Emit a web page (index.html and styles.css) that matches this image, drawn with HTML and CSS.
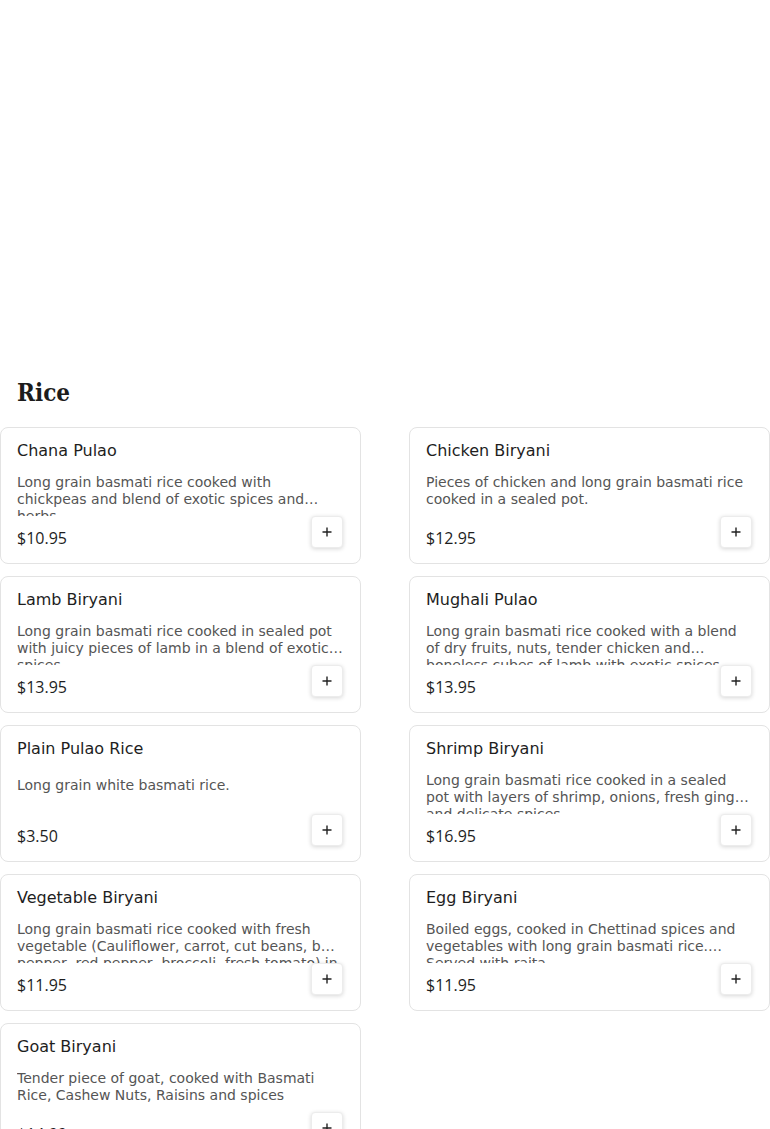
FILE: index.html
```html
<!DOCTYPE html>
<html lang="en">
<head>
<meta charset="utf-8">
<title>Rice</title>
<link rel="stylesheet" href="styles.css">
</head>
<body>
<div class="hero"></div>
<section class="category">
  <h2 class="category-title">Rice</h2>
  <div class="menu-grid">
    <div class="item-card">
      <div class="item-name">Chana Pulao</div>
      <div class="item-desc">Long grain basmati rice cooked with chickpeas and blend of exotic spices and herbs</div>
      <div class="item-footer"><span class="item-price">$10.95</span><button class="add-btn" aria-label="Add"><svg viewBox="0 0 12 12" width="12" height="12"><path d="M6 1.5v9M1.5 6h9" stroke="#222" stroke-width="1.4" fill="none"/></svg></button></div>
    </div>
    <div class="item-card">
      <div class="item-name">Chicken Biryani</div>
      <div class="item-desc">Pieces of chicken and long grain basmati rice cooked in a sealed pot.</div>
      <div class="item-footer"><span class="item-price">$12.95</span><button class="add-btn" aria-label="Add"><svg viewBox="0 0 12 12" width="12" height="12"><path d="M6 1.5v9M1.5 6h9" stroke="#222" stroke-width="1.4" fill="none"/></svg></button></div>
    </div>
    <div class="item-card">
      <div class="item-name">Lamb Biryani</div>
      <div class="item-desc">Long grain basmati rice cooked in sealed pot with juicy pieces of lamb in a blend of exotic spices</div>
      <div class="item-footer"><span class="item-price">$13.95</span><button class="add-btn" aria-label="Add"><svg viewBox="0 0 12 12" width="12" height="12"><path d="M6 1.5v9M1.5 6h9" stroke="#222" stroke-width="1.4" fill="none"/></svg></button></div>
    </div>
    <div class="item-card">
      <div class="item-name">Mughali Pulao</div>
      <div class="item-desc">Long grain basmati rice cooked with a blend of dry fruits, nuts, tender chicken and boneless cubes of lamb with exotic spices</div>
      <div class="item-footer"><span class="item-price">$13.95</span><button class="add-btn" aria-label="Add"><svg viewBox="0 0 12 12" width="12" height="12"><path d="M6 1.5v9M1.5 6h9" stroke="#222" stroke-width="1.4" fill="none"/></svg></button></div>
    </div>
    <div class="item-card">
      <div class="item-name">Plain Pulao Rice</div>
      <div class="item-desc item-desc--short">Long grain white basmati rice.</div>
      <div class="item-footer"><span class="item-price">$3.50</span><button class="add-btn" aria-label="Add"><svg viewBox="0 0 12 12" width="12" height="12"><path d="M6 1.5v9M1.5 6h9" stroke="#222" stroke-width="1.4" fill="none"/></svg></button></div>
    </div>
    <div class="item-card">
      <div class="item-name">Shrimp Biryani</div>
      <div class="item-desc">Long grain basmati rice cooked in a sealed pot with layers of shrimp, onions, fresh ginger and delicate spices</div>
      <div class="item-footer"><span class="item-price">$16.95</span><button class="add-btn" aria-label="Add"><svg viewBox="0 0 12 12" width="12" height="12"><path d="M6 1.5v9M1.5 6h9" stroke="#222" stroke-width="1.4" fill="none"/></svg></button></div>
    </div>
    <div class="item-card">
      <div class="item-name">Vegetable Biryani</div>
      <div class="item-desc">Long grain basmati rice cooked with fresh vegetable (Cauliflower, carrot, cut beans, bell pepper, red pepper, broccoli, fresh tomato) in a blend of spices</div>
      <div class="item-footer"><span class="item-price">$11.95</span><button class="add-btn" aria-label="Add"><svg viewBox="0 0 12 12" width="12" height="12"><path d="M6 1.5v9M1.5 6h9" stroke="#222" stroke-width="1.4" fill="none"/></svg></button></div>
    </div>
    <div class="item-card">
      <div class="item-name">Egg Biryani</div>
      <div class="item-desc">Boiled eggs, cooked in Chettinad spices and vegetables with long grain basmati rice. Served with raita</div>
      <div class="item-footer"><span class="item-price">$11.95</span><button class="add-btn" aria-label="Add"><svg viewBox="0 0 12 12" width="12" height="12"><path d="M6 1.5v9M1.5 6h9" stroke="#222" stroke-width="1.4" fill="none"/></svg></button></div>
    </div>
    <div class="item-card">
      <div class="item-name">Goat Biryani</div>
      <div class="item-desc">Tender piece of goat, cooked with Basmati Rice, Cashew Nuts, Raisins and spices</div>
      <div class="item-footer"><span class="item-price">$14.99</span><button class="add-btn" aria-label="Add"><svg viewBox="0 0 12 12" width="12" height="12"><path d="M6 1.5v9M1.5 6h9" stroke="#222" stroke-width="1.4" fill="none"/></svg></button></div>
    </div>
  </div>
</section>
</body>
</html>
```
FILE: styles.css
```css
* { box-sizing: border-box; }
html, body { margin: 0; padding: 0; background: #fff; }
body {
  font-family: "DejaVu Sans", "Liberation Sans", sans-serif;
  color: #222;
}
.hero { height: 376px; }
.category-title {
  margin: 0 0 18px 0;
  padding-left: 17px;
  font-family: "DejaVu Serif Condensed", "DejaVu Serif", serif;
  font-weight: 700;
  font-size: 24px;
  line-height: 33px;
  color: #1c1c1c;
}
.menu-grid {
  display: grid;
  grid-template-columns: 361px 361px;
  column-gap: 48px;
  row-gap: 12px;
}
.item-card {
  border: 1px solid #e3e3e3;
  border-radius: 8px;
  padding: 12px 17px 16px 16px;
  background: #fff;
  display: flex;
  flex-direction: column;
}
.item-name {
  font-size: 16px;
  line-height: 22px;
  color: #1e1e1e;
}
.item-desc {
  margin-top: 12px;
  font-size: 14px;
  line-height: 17px;
  height: 42px;
  color: #555;
  overflow: hidden;
  display: -webkit-box;
  -webkit-box-orient: vertical;
  -webkit-line-clamp: 2;
}
.item-desc--short { padding-top: 5px; }
.item-footer {
  display: flex;
  align-items: center;
  justify-content: space-between;
  height: 31px;
}
.item-price {
  font-family: "Open Sans", "Liberation Sans", sans-serif;
  font-size: 16px;
  line-height: 20px;
  color: #1e1e1e;
  padding-top: 12px;
}
.add-btn {
  width: 32px;
  height: 32px;
  border: 1px solid #ececec;
  border-radius: 4px;
  background: #fff;
  box-shadow: 0 1px 4px rgba(0,0,0,0.16);
  display: flex;
  align-items: center;
  justify-content: center;
  padding: 0;
  cursor: pointer;
}
```
